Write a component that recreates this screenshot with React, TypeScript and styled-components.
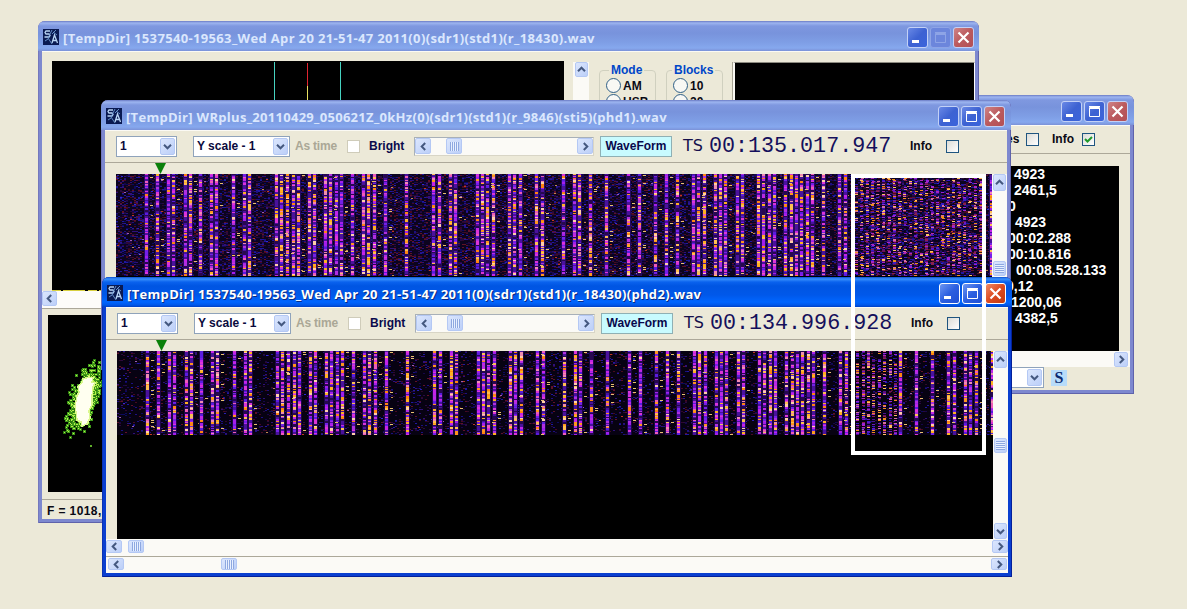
import React from "react";
import styled, { createGlobalStyle, css } from "styled-components";

const Global = createGlobalStyle`
  html, body { margin: 0; padding: 0; }
  body { background: #ece9d8; overflow: hidden; }
  * { box-sizing: border-box; }
`;

const Desktop = styled.div`
  position: relative;
  width: 1187px;
  height: 609px;
  overflow: hidden;
  background: #ece9d8;
  font: bold 12px/14px "Liberation Sans", sans-serif;
  color: #0a0a14;
`;

/* ---------- window chrome ---------- */

const Win = styled.div<{ $x: number; $y: number; $w: number; $h: number; $active?: boolean }>`
  position: absolute;
  left: ${(p) => p.$x}px;
  top: ${(p) => p.$y}px;
  width: ${(p) => p.$w}px;
  height: ${(p) => p.$h}px;
  display: flex;
  flex-direction: column;
  overflow: hidden;
  border-radius: 7px 7px 0 0;
  padding: 0 4px 4px;
  background: ${(p) => (p.$active ? "#0a3fd0" : "#7d88cf")};
  box-shadow: inset 1px 0 ${(p) => (p.$active ? "#0a32b4" : "#7478bd")},
    inset -1px -1px ${(p) => (p.$active ? "#04209a" : "#5f63ab")};
`;

const TitleBar = styled.div<{ $active?: boolean; $pad: number }>`
  flex: none;
  height: 30px;
  margin: 0 -4px;
  padding: 2px ${(p) => p.$pad}px 0 5px;
  display: flex;
  align-items: center;
  border-radius: 7px 7px 0 0;
  background: ${(p) =>
    p.$active
      ? "linear-gradient(#0a4fd0 0, #3a91fb 2px, #0a62ee 5px, #0055e2 9px, #0058ea 18px, #0066ff 25px, #0058ea 28px, #0040c4 30px)"
      : "linear-gradient(#6a7ac4 0, #9db5f0 2px, #7f98e0 5px, #7893dc 12px, #7f9fe6 22px, #86a8ee 27px, #7b92d8 30px)"};
`;

const Title = styled.div<{ $active?: boolean; $spacing: number }>`
  flex: 1;
  margin-left: 4px;
  padding-top: 1px;
  white-space: nowrap;
  font: 700 13px/18px "Open Sans", "Noto Sans", sans-serif;
  letter-spacing: ${(p) => p.$spacing}px;
  color: ${(p) => (p.$active ? "#fff" : "#dbe7fd")};
  ${(p) => p.$active && css`text-shadow: 1px 1px #0a2a80;`}
`;

const TitleButtons = styled.div`
  display: flex;
  gap: 2px;
`;

const TitleButton = styled.div<{ $kind: "min" | "max" | "close"; $active?: boolean; $off?: boolean }>`
  width: 21px;
  height: 21px;
  border-radius: 3px;
  border: 1px solid ${(p) => (p.$off ? "#8ea4e6" : p.$active ? "#fff" : "#c3d1f6")};
  background: ${(p) =>
    p.$kind === "close"
      ? p.$active
        ? "linear-gradient(135deg, #ee8a66, #dc4a20 50%, #c03a10)"
        : "linear-gradient(135deg, #cf8487, #bb5a5e 50%, #b35055)"
      : p.$off
        ? "#6c86dc"
        : p.$active
          ? "linear-gradient(135deg, #6d96f2, #2c5fe0 50%, #1f4fd4)"
          : "linear-gradient(135deg, #6a89e6, #3d62d2 50%, #3a64dc)"};
  svg { display: block; }
`;

const Client = styled.div`
  flex: 1;
  min-height: 0;
  display: flex;
  flex-direction: column;
  background: #ece9d8;
  box-shadow: inset 0 1px #fbfaf4;
  overflow: hidden;
`;

const AppIcon = () => (
  <svg width="16" height="16" viewBox="0 0 16 16">
    <rect width="16" height="16" fill="#0a1a52" />
    <path d="M7 2H3L2 3.5 3 5H6L7 6.5 6 8H1.500M9 14L11.500 6 14.500 14M10 11.500H14" stroke="#b8d4f4" fill="none" strokeWidth="1.300" />
    <path d="M9 1L5 9L9 15M9 5L13 1M10 3L14 6M2 12L5 10" stroke="#6f9bd4" fill="none" strokeWidth=".9" />
  </svg>
);

function Controls({ active, noMax }: { active?: boolean; noMax?: boolean }) {
  return (
    <TitleButtons>
      <TitleButton $kind="min" $active={active}>
        <svg width="19" height="19"><path d="M4 12h7v3H4z" fill="#fff" /></svg>
      </TitleButton>
      <TitleButton $kind="max" $active={active} $off={noMax}>
        <svg width="19" height="19">
          <path d="M4.500 5.500h10v9h-10zM4 4.500h11M4.500 6.500h10" fill="none" stroke={noMax ? "#8ea4e6" : "#fff"} />
        </svg>
      </TitleButton>
      <TitleButton $kind="close" $active={active}>
        <svg width="19" height="19"><path d="M4.500 4.500l10 10M14.500 4.500l-10 10" stroke="#fff" strokeWidth="2.200" /></svg>
      </TitleButton>
    </TitleButtons>
  );
}

/* ---------- common controls ---------- */

const Toolbar = styled.div`
  flex: none;
  height: 33px;
  display: flex;
  align-items: center;
  padding-left: 11px;
  border-bottom: 1px solid #aca899;
`;

const Combo = styled.div<{ $w: number; $gap?: number }>`
  width: ${(p) => p.$w}px;
  height: 21px;
  margin-right: ${(p) => p.$gap ?? 0}px;
  flex: none;
  display: flex;
  align-items: center;
  justify-content: space-between;
  padding: 1px 1px 1px 3px;
  border: 1px solid #8fa3bb;
  background: #fff;
  color: #0a0a3c;
`;

const Label = styled.span<{ $w: number; $grey?: boolean; $navy?: boolean }>`
  flex: none;
  width: ${(p) => p.$w}px;
  white-space: nowrap;
  color: ${(p) => (p.$grey ? "#aaa796" : p.$navy ? "#0a0a4c" : "#0a0a14")};
  letter-spacing: ${(p) => (p.$grey ? -0.2 : 0)}px;
`;

const Check = styled.span<{ $off?: boolean; $gap?: number }>`
  flex: none;
  width: 13px;
  height: 13px;
  margin-right: ${(p) => p.$gap ?? 0}px;
  border: 1px solid ${(p) => (p.$off ? "#cfccba" : "#1f5580")};
  background: ${(p) => (p.$off ? "#fff" : "linear-gradient(135deg, #dcdcd7, #fff)")};
  svg { display: block; }
`;

const WaveButton = styled.div`
  flex: none;
  width: 72px;
  height: 21px;
  margin: 0 11px 0 6px;
  border: 1px solid #8fb0b4;
  background: #c8fbff;
  color: #08084c;
  text-align: center;
  line-height: 19px;
`;

const TsLabel = styled.span`
  flex: none;
  width: 26px;
  font: 16px/20px "DejaVu Sans", sans-serif;
  color: #15104c;
`;

const TsValue = styled.span`
  flex: none;
  width: 201px;
  padding-top: 2px;
  font: 21.700px/22px "Liberation Mono", monospace;
  color: #15105c;
`;

const Arrow = ({ dir }: { dir: "up" | "down" | "left" | "right" }) => {
  const turn = { up: 0, right: 90, down: 180, left: 270 }[dir];
  return (
    <svg width="9" height="9" viewBox="0 0 9 9">
      <path d="M1 6.200L4.500 2.700L8 6.200" fill="none" stroke="#44587f" strokeWidth="2" transform={`rotate(${turn} 4.5 4.5)`} />
    </svg>
  );
};

const Knob = styled.div<{ $w: number; $h: number }>`
  flex: none;
  width: ${(p) => p.$w}px;
  height: ${(p) => p.$h}px;
  display: flex;
  align-items: center;
  justify-content: center;
  border: 1px solid #b4c8f4;
  border-radius: 2px;
  background: linear-gradient(135deg, #dbe6fd, #bccff8);
`;

const Grip = styled.div<{ $v?: boolean }>`
  width: 9px;
  height: 9px;
  background: repeating-linear-gradient(${(p) => (p.$v ? "180deg" : "90deg")}, #8ea8e0 0 1px, #e8f0ff 1px 2px);
`;

const Track = styled.div<{ $v?: boolean; $size: number; $box?: boolean }>`
  flex: none;
  display: flex;
  flex-direction: ${(p) => (p.$v ? "column" : "row")};
  align-items: center;
  background: #fbfaf6;
  ${(p) => (p.$v ? `width: ${p.$size}px;` : `height: ${p.$size}px;`)}
  ${(p) => p.$box && css`width: 180px; border: 1px solid #a8b0b8; border-right-color: #d8d5c6; border-bottom-color: #d8d5c6;`}
`;

const Space = styled.div<{ $n?: number }>`
  flex: ${(p) => (p.$n === undefined ? "1" : `0 0 ${p.$n}px`)};
`;

const DropKnob = ({ h = 17 }: { h?: number }) => (
  <Knob $w={15} $h={h}><Arrow dir="down" /></Knob>
);

/* ---------- spectrogram ---------- */

function rng(seed: number) {
  let s = seed;
  return () => {
    s = (s + 0x6d2b79f5) >>> 0;
    let t = s;
    t = Math.imul(t ^ (t >>> 15), t | 1);
    t ^= t + Math.imul(t ^ (t >>> 7), t | 61);
    return ((t ^ (t >>> 14)) >>> 0) / 4294967296;
  };
}

const CARRIERS = [
  147.3, 158, 169.3, 174, 185.5, 190.5, 201.3, 212.3, 217.3, 233.7, 244.7, 250, 277.3, 282, 288.3, 293.7, 299, 309.7,
  315.3, 326, 331.3, 337, 342, 353, 364, 369.3, 374.5, 385.7, 407.3, 434.3, 439.7, 450.7, 456, 477.7, 483, 488.3,
  493.7, 510, 515.3, 520.7, 537.3, 542.7, 564, 575, 580.3, 591.3, 607.3, 629, 640, 656, 667.3, 677.7, 694.3, 699.3,
  705, 716, 721.3, 726.3, 737.7, 742.7, 759.3, 764.3, 770.3, 775.3, 786, 791.7, 796.7, 802, 808, 813.3, 824, 840, 846,
  900, 916, 932.3, 948.3, 954, 965, 970, 975.7, 992,
].map((x) => x - 117);
const BURST = [857, 862.5, 868, 873, 878.5, 884, 889.5, 894.5].map((x) => x - 117);

const COOL = ["#c424e8", "#a41eec", "#7420e8", "#5a1ce0", "#b030e0", "#dc34d8"];
const WARM = ["#ff961c", "#ffb020", "#ffcfa8", "#f08cb0", "#ee5cb8", "#ff8410", "#ffc050"];
const DIM = ["#16064a", "#2a0a40", "#30082c", "#0a0a5e", "#1c1080", "#480a20", "#30107a", "#2018a0", "#601228"];
const BURST_COLORS = ["#9a22d8", "#6a18c4", "#3a1cc8", "#b028b8", "#d870a0", "#f08c1c", "#ffc060", "#4a1090", "#6a1060", "#8a2050"];

function buildLayers(seed: number, height: number, noisy: boolean) {
  const r = rng(seed);
  const out: { color: string; d: string }[] = [];
  let bucket: Record<string, string[]> = {};
  const put = (c: string, x: number, y: number, w: number, h: number) => {
    (bucket[c] ||= []).push(`M${x} ${y}h${w}v${h}h-${w}z`);
  };
  const flush = () => {
    Object.entries(bucket).forEach(([color, d]) => out.push({ color, d: d.join("") }));
    bucket = {};
  };
  const pick = (list: string[]) => list[Math.floor(r() * list.length)];

  const density = noisy ? 0.42 : 0.16;
  for (let y = 0; y < height; y += 1) {
    for (let x = 0; x < 876; x += 2) {
      if (r() < density) put(pick(DIM), x, y, 2, 1);
    }
    const sparks = noisy ? 16 : 6;
    for (let i = 0; i < sparks; i++) {
      if (r() < 0.4) put(pick(["#c08850", "#3028d8", "#c03820", "#9a5cb0", "#2a20b0"]), Math.floor(r() * 872), y, 2, 1);
    }
  }
  flush();

  const lines = CARRIERS.filter((c) => !(noisy && c > 738 && c < 866));
  lines.forEach((c) => put(noisy ? "#260a60" : "#1c0646", Math.round(c) - 2, 0, 5, height));
  flush();
  lines.forEach((c) => {
    const x = Math.round(c) - 1;
    const warm = 0.22 + r() * 0.42;
    let run = 0;
    let color = "";
    for (let y = 0; y < height; y += 1) {
      if (run <= 0) {
        run = 1 + Math.floor(r() * 1.900);
        const t = r();
        color = t < 0.2 ? "#4a129c" : t < 0.32 ? "#280850" : pick(r() < warm ? WARM : COOL);
      }
      put(color, x, y, 3, 1);
      run -= 1;
    }
    // short echoes beside strong carriers
    for (let y = 1; y < height; y += 2) {
      if (r() < 0.07) put("#e8c070", x + 5, y, 3, 1);
    }
  });
  flush();

  if (noisy) {
    for (let i = 0; i < 24; i++) {
      const x = 739 + i * 5.400;
      const level = 0.42 + r() * 0.22;
      for (let y = 0; y < height; y++) {
        if (r() < level) put(pick(BURST_COLORS), Math.round(x + (r() - 0.5)), y, 3, 1);
        if (r() < 0.25) put(pick(DIM), Math.round(x + 3), y, 3, 1);
      }
    }
  } else {
    BURST.forEach((x) => {
      for (let y = 0; y < height; y++) {
        if (r() < 0.55) put(pick(BURST_COLORS), Math.round(x - 1), y, 3, 1);
      }
    });
  }
  flush();
  return out;
}

const LAYERS_TOP = buildLayers(11, 102, true);
const LAYERS_BOTTOM = buildLayers(77, 84, false);

const SpectroBox = styled.div`
  flex: none;
  width: 876px;
  height: 188px;
  background: #000;
  svg { display: block; }
`;

function Spectrogram({ noisy }: { noisy?: boolean }) {
  const layers = noisy ? LAYERS_TOP : LAYERS_BOTTOM;
  const h = noisy ? 102 : 84;
  return (
    <SpectroBox>
      <svg width="876" height={h} shapeRendering="crispEdges">
        <rect width="876" height={h} fill={noisy ? "#0c041e" : "#070212"} />
        {layers.map((l, i) => (
          <path key={i} d={l.d} fill={l.color} />
        ))}
      </svg>
    </SpectroBox>
  );
}

const MarkerRow = styled.div`
  flex: none;
  height: 11px;
  padding-left: 49px;
  svg { display: block; }
`;

const ViewRow = styled.div`
  flex: none;
  display: flex;
  padding-left: 11px;
  height: 188px;
`;

const BottomScroll = styled.div`
  display: flex;
  flex-direction: column;
  background: #fbfaf6;
  flex: 1;
`;

const Rule = styled.div`
  flex: none;
  height: 1px;
  background: #aca899;
  margin: 2px 0 0;
`;

interface PhaseProps {
  x: number;
  y: number;
  h: number;
  title: string;
  spacing: number;
  time: string;
  active?: boolean;
}

function PhaseWindow({ x, y, h, title, spacing, time, active }: PhaseProps) {
  return (
    <Win $x={x} $y={y} $w={910} $h={h} $active={active}>
      <TitleBar $active={active} $pad={6}>
        <AppIcon />
        <Title $active={active} $spacing={spacing}>{title}</Title>
        <Controls active={active} />
      </TitleBar>
      <Client>
        <Toolbar>
          <Combo $w={61} $gap={16}>1<DropKnob /></Combo>
          <Combo $w={97} $gap={5}>Y scale - 1<DropKnob /></Combo>
          <Label $w={52} $grey>As time</Label>
          <Check $off $gap={9} />
          <Label $w={45} $navy>Bright</Label>
          <Track $size={19} $box>
            <Knob $w={16} $h={16}><Arrow dir="left" /></Knob>
            <Space $n={15} />
            <Knob $w={16} $h={16}><Grip /></Knob>
            <Space />
            <Knob $w={16} $h={16}><Arrow dir="right" /></Knob>
          </Track>
          <WaveButton>WaveForm</WaveButton>
          <TsLabel>TS</TsLabel>
          <TsValue>{time}</TsValue>
          <Label $w={36}>Info</Label>
          <Check />
        </Toolbar>
        <MarkerRow>
          <svg width="13" height="11"><path d="M1 0h11L6.500 11z" fill="#0a800a" /></svg>
        </MarkerRow>
        <ViewRow>
          <Spectrogram noisy={!active} />
          <Track $v $size={15}>
            <Knob $w={13} $h={17}><Arrow dir="up" /></Knob>
            <Space $n={70} />
            <Knob $w={13} $h={15}><Grip $v /></Knob>
            <Space />
            <Knob $w={13} $h={16}><Arrow dir="down" /></Knob>
          </Track>
        </ViewRow>
        <BottomScroll>
          <Track $size={15}>
            <Knob $w={16} $h={13}><Arrow dir="left" /></Knob>
            <Space $n={6} />
            <Knob $w={16} $h={13}><Grip /></Knob>
            <Space />
            <Knob $w={16} $h={13}><Arrow dir="right" /></Knob>
          </Track>
          <Rule />
          <Track $size={14}>
            <Space $n={2} />
            <Knob $w={16} $h={12}><Arrow dir="left" /></Knob>
            <Space $n={97} />
            <Knob $w={16} $h={12}><Grip /></Knob>
            <Space />
            <Knob $w={16} $h={12}><Arrow dir="right" /></Knob>
            <Space $n={1} />
          </Track>
        </BottomScroll>
      </Client>
    </Win>
  );
}

/* ---------- main analyser window ---------- */

const TopArea = styled.div`
  flex: none;
  height: 240px;
  display: flex;
  padding: 10px 0 0 10px;
  align-items: flex-start;
`;

const Plot = styled.div<{ $w: number; $h: number }>`
  flex: none;
  width: ${(p) => p.$w}px;
  height: ${(p) => p.$h}px;
  background: #000;
  svg { display: block; }
`;

const TallTrack = styled(Track)`
  height: 230px;
  margin: 1px 10px 0 9px;
`;

const Group = styled.fieldset<{ $gap: number; $inset: number }>`
  flex: none;
  width: 57px;
  height: 150px;
  min-width: 0;
  margin: 2px ${(p) => p.$gap}px 0 0;
  padding: 0 0 0 6px;
  border: 1px solid #d0d0bf;
  border-radius: 4px;
  legend { color: #0046c8; padding: 0 2px; margin-left: ${(p) => p.$inset}px; font-size: 12px; line-height: 14px; }
`;

const Radio = styled.div`
  display: flex;
  align-items: center;
  gap: 2px;
  height: 16px;
  padding-top: 1px;
  &::before {
    content: "";
    width: 13px;
    height: 13px;
    flex: none;
    border-radius: 50%;
    border: 1px solid #2f5f86;
    background: #f8f8f4;
  }
`;

const SidePlot = styled.div`
  width: 242px;
  height: 200px;
  margin-top: 1px;
  background: #000;
  border: solid;
  border-width: 1px 1px 0 2px;
  border-color: #8c8a80 #fff #fff #fbfaf4;
  box-shadow: -1px 0 #a8a595;
`;

const ScrollLine = styled.div`
  flex: none;
  height: 18px;
  background: #fdfcf9;
  border-bottom: 1px solid #aca899;
`;

const LowArea = styled.div`
  flex: none;
  padding: 6px 0 0 6px;
  height: 190px;
`;

const Status = styled.div`
  flex: 1;
  border-top: 1px solid #aca899;
  padding: 4px 0 0 5px;
  letter-spacing: 0.4px;
`;

const CLOUD = (() => {
  const r = rng(5);
  const g = () => (r() + r() + r() - 1.5) / 1.5;
  return Array.from({ length: 760 }, () => {
    const v = g() * 42;
    return { x: 36 - v * 0.3 + g() * 18, y: 84 + v };
  });
})();

function Constellation() {
  return (
    <svg width="400" height="177" shapeRendering="crispEdges">
      {CLOUD.map((p, i) => (
        <rect key={i} x={Math.round(p.x) - 1} y={Math.round(p.y) - 1} width="3" height="3" fill={i % 3 ? "#3f9a1a" : "#2b7a10"} />
      ))}
      {CLOUD.map((p, i) => (
        <rect key={i} x={Math.round(p.x)} y={Math.round(p.y)} width="1" height="1" fill="#b6f04a" />
      ))}
      <path d="M41 62l4 1-1 4 3 1-2 4-1 9v8l-3 7 1 7-3 6-5 2-1-4-4-2-1-8-1-6 2-10 2-4-1-5 4-5 1-3 3-1z" fill="#fffff0" stroke="#dcf890" strokeWidth="1.500" />
      <rect x="42" y="130" width="2" height="2" fill="#5fae2a" />
    </svg>
  );
}

function MainWindow() {
  return (
    <Win $x={38} $y={21} $w={941} $h={502}>
      <TitleBar $pad={5}>
        <AppIcon />
        <Title $spacing={0.34}>[TempDir] 1537540-19563_Wed Apr 20 21-51-47 2011(0)(sdr1)(std1)(r_18430).wav</Title>
        <Controls noMax />
      </TitleBar>
      <Client>
        <TopArea>
          <Plot $w={512} $h={230}>
            <svg width="512" height="230" shapeRendering="crispEdges">
              <path d="M222 1h1v200h-1zM288 1h1v200h-1z" fill="#46d2c0" />
              <rect x="255" y="2" width="1" height="23" fill="#e02430" />
              <rect x="255" y="25" width="1" height="90" fill="#e8e060" />
              <path d="M0 229.500H512" stroke="#d8d040" strokeDasharray="9 2 22 3" />
            </svg>
          </Plot>
          <TallTrack $v $size={16}>
            <Knob $w={13} $h={15}><Arrow dir="up" /></Knob>
          </TallTrack>
          <Group $gap={10} $inset={3}>
            <legend>Mode</legend>
            <Radio>AM</Radio>
            <Radio>USB</Radio>
          </Group>
          <Group $gap={10} $inset={-1}>
            <legend>Blocks</legend>
            <Radio>10</Radio>
            <Radio>20</Radio>
          </Group>
          <SidePlot />
        </TopArea>
        <ScrollLine><Knob $w={15} $h={15}><Arrow dir="left" /></Knob></ScrollLine>
        <LowArea><Plot $w={400} $h={177}><Constellation /></Plot></LowArea>
        <Status>F = 1018,</Status>
      </Client>
    </Win>
  );
}

/* ---------- info window ---------- */

const InfoTools = styled(Toolbar)`
  height: 29px;
  justify-content: flex-end;
  padding-right: 35px;
`;

const Readout = styled.div`
  flex: none;
  height: 185px;
  margin: 12px 11px 0 10px;
  background: #000;
  color: #fff;
  font: bold 14px/16px "Liberation Sans", sans-serif;
`;

const ReadLine = styled.div<{ $x: number }>`
  padding-left: ${(p) => p.$x - 914}px;
  white-space: nowrap;
`;

const InfoFooter = styled.div`
  flex: 1;
  display: flex;
  align-items: flex-start;
  padding: 0 0 0 40px;
`;

const SButton = styled.div`
  width: 16px;
  height: 16px;
  margin: 3px 0 0 7px;
  background: #b8dcfa;
  color: #0a2a70;
  text-align: center;
  font: bold 16px/16px "Liberation Serif", serif;
`;

const READINGS: [number, string][] = [
  [1014, "4923"],
  [1014, "2461,5"],
  [1008, "0"],
  [1015, "4923"],
  [1008, "00:02.288"],
  [1008, "00:10.816"],
  [1016, "00:08.528.133"],
  [1006, "0,12"],
  [1011, "1200,06"],
  [1015, "4382,5"],
];

function InfoWindow() {
  return (
    <Win $x={900} $y={95} $w={234} $h={299}>
      <TitleBar $pad={6}>
        <Title $spacing={0} />
        <Controls />
      </TitleBar>
      <Client>
        <InfoTools>
          <Label $w={20}>es</Label>
          <Check $gap={13} />
          <Label $w={30}>Info</Label>
          <Check>
            <svg width="11" height="11"><path d="M2 5l2.500 2.500L9 3" fill="none" stroke="#1f9a2a" strokeWidth="2" /></svg>
          </Check>
        </InfoTools>
        <Readout>
          {READINGS.map(([x, t], i) => (
            <ReadLine key={i} $x={x}>{t}</ReadLine>
          ))}
        </Readout>
        <Track $size={16}>
          <Space />
          <Knob $w={14} $h={15}><Arrow dir="right" /></Knob>
          <Space $n={2} />
        </Track>
        <InfoFooter>
          <Combo $w={100}><span /><DropKnob /></Combo>
          <SButton>S</SButton>
        </InfoFooter>
      </Client>
    </Win>
  );
}

const Highlight = styled.div`
  position: absolute;
  left: 851px;
  top: 174px;
  width: 135px;
  height: 281px;
  border: 4px solid #fff;
`;

export default function App() {
  return (
    <Desktop>
      <Global />
      <InfoWindow />
      <MainWindow />
      <PhaseWindow
        x={101}
        y={100}
        h={270}
        title="[TempDir] WRplus_20110429_050621Z_0kHz(0)(sdr1)(std1)(r_9846)(sti5)(phd1).wav"
        spacing={0.29}
        time="00:135.017.947"
      />
      <PhaseWindow
        x={102}
        y={277}
        h={300}
        title="[TempDir] 1537540-19563_Wed Apr 20 21-51-47 2011(0)(sdr1)(std1)(r_18430)(phd2).wav"
        spacing={0.33}
        time="00:134.996.928"
        active
      />
      <Highlight />
    </Desktop>
  );
}
